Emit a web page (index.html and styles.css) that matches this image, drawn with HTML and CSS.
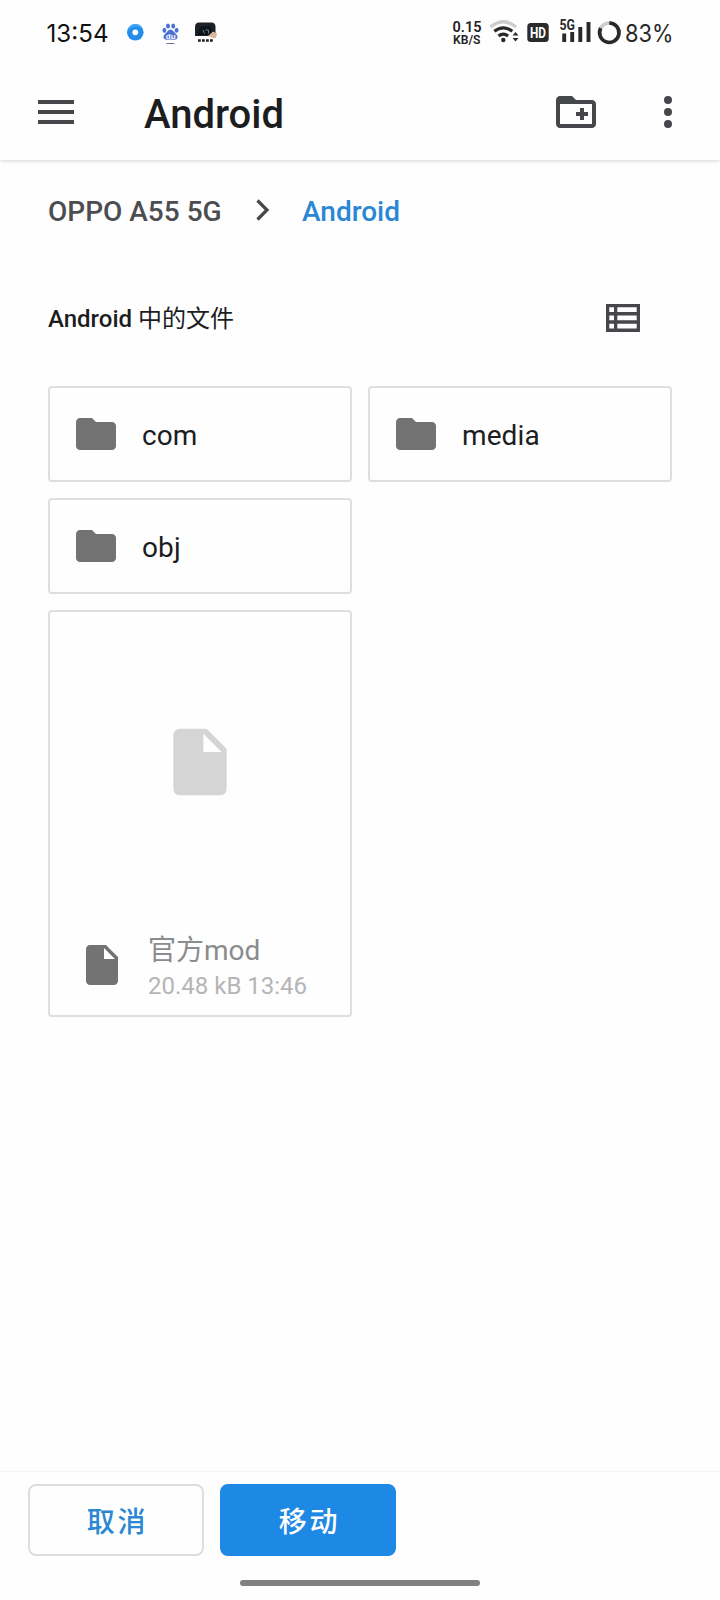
FILE: index.html
```html
<!DOCTYPE html>
<html lang="zh-CN">
<head>
<meta charset="utf-8">
<title>Android</title>
<link rel="stylesheet" href="styles.css">
</head>
<body>
<svg class="defs" aria-hidden="true">
  <symbol id="folder" viewBox="0 0 24 24"><path d="M10 4H4c-1.100 0-2 .9-2 2v12c0 1.100.9 2 2 2h16c1.100 0 2-.9 2-2V8c0-1.100-.9-2-2-2h-8z"/></symbol>
  <symbol id="file" viewBox="0 0 24 24"><path fill-rule="evenodd" d="M6 2c-1.100 0-2 .9-2 2v16c0 1.100.9 2 2 2h12c1.100 0 2-.9 2-2V8l-6-6H6zm7 7V3.500L18.500 9H13z"/></symbol>
</svg>
<div class="screen">
  <div class="status">
    <svg class="clock" width="80" height="42" viewBox="0 -6 80 42"><text x="0.500" y="23.600" class="time" textLength="62" lengthAdjust="spacingAndGlyphs">13:54</text></svg>
    <svg class="notices" width="92" height="24" viewBox="0 0 92 24">
      <circle cx="9.300" cy="10.300" r="8.300" fill="#238de9"/><path d="M2 8A8 8 0 0 1 17 7Q10 1 2 8" fill="#42a9f5"/><circle cx="9.300" cy="10.300" r="2.900" fill="#fff"/>
      <g fill="#4a70d6"><ellipse cx="38.400" cy="8.300" rx="1.900" ry="2.500"/><ellipse cx="42" cy="4" rx="2" ry="2.600"/><ellipse cx="47.200" cy="4" rx="2" ry="2.600"/><ellipse cx="50.600" cy="8.300" rx="1.900" ry="2.500"/><path d="M44.500 7.600c2.500 0 3.200 2.400 5 4 4 3.500 1.500 6.500-1.500 6.100q-3.500-.5-7 0c-3.500.4-5-3.100-1.500-6.100 1.900-1.600 2.500-4 5-4"/></g>
      <text x="39.800" y="16.500" class="paw">du</text><path d="M40.500 21.500h8" stroke="#7d6b99"/>
      <path d="M69 14V5q0-4.500 4-4.500h12.500q4 0 4 4.500v9z" fill="#1b2225"/><path d="M72 13q0-8 4-9h6q4 0 5 9z" fill="#0d1518"/><path d="M77 8l1.500 3.500m1-3.500h3v3.500" stroke="#598798" fill="none"/><path d="M82 14l5-4.500 4 2-1 4.500h-3z" fill="#d8b6a1"/>
      <path d="M72 18.500h15" stroke="#222" stroke-width="2.600" stroke-dasharray="2.800 1.200"/>
    </svg>
    <svg class="signals" width="226" height="42" viewBox="0 -6 226 42">
      <text x="-0.500" y="14.300" class="rate" textLength="29" lengthAdjust="spacingAndGlyphs">0.15</text>
      <text x="0" y="26" class="unit" textLength="27.500" lengthAdjust="spacingAndGlyphs">KB/S</text>
      <g fill="none" stroke-width="3.200"><path d="M37.500 9q12.800-10.500 25.600 0" stroke="#ccc"/><path d="M41.300 13.300q9-7 18 0M45.500 18q4.800-3.800 9.600 0" stroke="#292929"/></g>
      <circle cx="50.300" cy="22" r="2.200" fill="#292929"/><path d="M59.500 17.500l3-3.500 3 3.500zm0 2.500h6l-3 3.500z" fill="#292929"/>
      <rect x="74.300" y="5" width="21.400" height="19" rx="3.500" fill="#2b2b2b"/><text x="77" y="19.500" class="hd" textLength="16" lengthAdjust="spacingAndGlyphs">HD</text>
      <text x="106.500" y="12" class="net" textLength="15.500" lengthAdjust="spacingAndGlyphs">5G</text>
      <path d="M111.200 15.500V24M119.200 14v10M127.300 9v15M135.500 4v20" stroke="#292929" stroke-width="3.900"/>
      <circle cx="156.300" cy="14.700" r="9.700" fill="none" stroke="#ccc" stroke-width="3.600"/><path d="M156.300 5a9.700 9.700 0 1 1-8.600 5.200" fill="none" stroke="#292929" stroke-width="3.600"/>
      <text x="172" y="23.700" class="power" textLength="48.500" lengthAdjust="spacingAndGlyphs">83%</text>
    </svg>
  </div>
  <header class="appbar">
    <svg class="icon" viewBox="0 0 24 24"><path d="M3 18h18v-2H3zm0-5h18v-2H3zm0-7v2h18V6z"/></svg>
    <h1 class="title">Android</h1>
    <svg class="icon" viewBox="0 0 24 24"><path fill-rule="evenodd" d="M20 6h-8l-2-2H4c-1.100 0-2 .9-2 2v12c0 1.100.9 2 2 2h16c1.100 0 2-.9 2-2V8c0-1.100-.9-2-2-2zm0 12H4V8h16zm-8-4h2v2h2v-2h2v-2h-2v-2h-2v2h-2z"/></svg>
    <svg class="icon more" viewBox="0 0 24 24"><circle cx="12" cy="6" r="2"/><circle cx="12" cy="12" r="2"/><circle cx="12" cy="18" r="2"/></svg>
  </header>
  <nav class="crumbs">
    <span class="device">OPPO A55 5G</span>
    <svg class="chevron" width="14" height="22" viewBox="0 0 14 22"><path d="M1.500 1.500L11 11l-9.500 9.500" fill="none" stroke="#45474b" stroke-width="3.200"/></svg>
    <span class="current">Android</span>
  </nav>
  <div class="section">
    <h2 class="heading">Android <span class="cjk">中的文件</span></h2>
    <svg width="34" height="28" viewBox="0 0 34 28"><path fill="#45474b" fill-rule="evenodd" d="M0 0h34v28H0zM3.300 3.300v4.700H8V3.300zm8 0v4.700h19.400V3.300zM3.300 11.500v4.700H8v-4.700zm8 0v4.700h19.400v-4.700zM3.300 19.800v4.700H8v-4.700zm8 0v4.700h19.400v-4.700z"/></svg>
  </div>
  <main class="grid">
    <div class="card folder"><svg class="glyph"><use href="#folder"/></svg><span class="name">com</span></div>
    <div class="card folder"><svg class="glyph"><use href="#folder"/></svg><span class="name">media</span></div>
    <div class="card folder"><svg class="glyph"><use href="#folder"/></svg><span class="name">obj</span></div>
    <div class="card file">
      <div class="preview"><svg class="thumb"><use href="#file"/></svg></div>
      <div class="meta">
        <svg class="glyph"><use href="#file"/></svg>
        <div class="details"><div class="filename">官方mod</div><div class="info">20.48 kB 13:46</div></div>
      </div>
    </div>
  </main>
  <footer class="actions">
    <button class="btn">取消</button>
    <button class="btn primary">移动</button>
  </footer>
  <div class="home"></div>
</div>
</body>
</html>
```
FILE: styles.css
```css
* { box-sizing: border-box; }
body { margin: 0; background: #fefefe; font-family: Roboto, "Noto Sans CJK SC", sans-serif; color: #1c1d1f; }
.defs { display: none; }
.screen { width: 720px; height: 1600px; display: flex; flex-direction: column; }
.status { height: 64px; display: flex; padding: 0 41px 0 46px; align-items: flex-start; }
.clock { margin-top: 12px; flex: none; }
.notices { margin-top: 22px; flex: none; }
.signals { margin: 12px 0 0 auto; flex: none; overflow: visible; }
.time { font: 24.500px Inter, sans-serif; fill: #111; }
.paw { font: bold 8px "Liberation Sans", sans-serif; fill: #fff; }
.rate { font: 600 15.500px Roboto, sans-serif; fill: #222; }
.unit { font: 600 12.500px Roboto, sans-serif; fill: #222; }
.hd { font: bold 14px Roboto, sans-serif; fill: #fff; }
.net { font: bold 14px Roboto, sans-serif; fill: #292929; }
.power { font: 24px Inter, sans-serif; fill: #292929; }
.appbar { height: 96px; padding: 0 28px 0 32px; display: flex; align-items: center; box-shadow: 0 1px 4px rgba(0, 0, 0, .17); clip-path: inset(0 0 -10px 0); }
.icon { width: 48px; height: 48px; fill: #45474b; flex: none; }
.more { margin-left: 44px; }
.title { margin: 6px auto 0 64px; font-size: 40px; line-height: 48px; font-weight: 500; }
.crumbs { height: 102px; padding: 2px 48px 0; display: flex; align-items: center; font-size: 28px; line-height: 32px; font-weight: 500; }
.device { width: 208px; color: #4b4d51; }
.chevron { margin-right: 32px; margin-top: -4px; }
.current { color: #2b87d3; }
.section { height: 112px; padding: 0 80px 0 48px; display: flex; align-items: center; justify-content: space-between; }
.heading { margin: 2px 0 0; font-size: 24px; line-height: 32px; font-weight: 500; }
.cjk { font-weight: 400; }
.grid { margin-top: 12px; padding: 0 48px; display: grid; grid-template-columns: 304px 304px; gap: 16px; }
.card { border: 2px solid #dedede; border-radius: 4px; }
.folder { height: 96px; padding: 0 22px; display: flex; align-items: center; gap: 22px; }
.glyph { width: 48px; height: 48px; fill: #737373; flex: none; }
.name { font-size: 28px; line-height: 32px; padding-top: 4px; letter-spacing: .1px; }
.file { grid-column: 1; height: 407px; }
.preview { height: 300px; display: flex; align-items: center; justify-content: center; }
.thumb { width: 80px; height: 80px; fill: #d5d5d5; }
.meta { display: flex; align-items: flex-start; padding: 0 0 0 28px; }
.meta .glyph { margin-top: 29px; }
.details { padding: 22px 0 0 22px; white-space: nowrap; }
.filename { font-size: 28px; line-height: 34px; color: #8b8c8d; }
.info { font-size: 24px; line-height: 36px; color: #b5b5b6; }
.actions { margin-top: auto; height: 109px; padding: 12px 28px; border-top: 1px solid #f4f4f4; display: flex; gap: 16px; }
.btn { width: 176px; height: 72px; padding: 6px 0 0 3px; border: 2px solid #dedede; border-radius: 8px; background: transparent; color: #2b87d3; font: 500 28px/36px Roboto, "Noto Sans CJK SC", sans-serif; letter-spacing: 2.800px; }
.primary { border-color: #1e88e5; background: #1e88e5; color: #fff; }
.home { width: 240px; height: 6px; margin: 0 auto 14px; border-radius: 3px; background: #808080; }
```
